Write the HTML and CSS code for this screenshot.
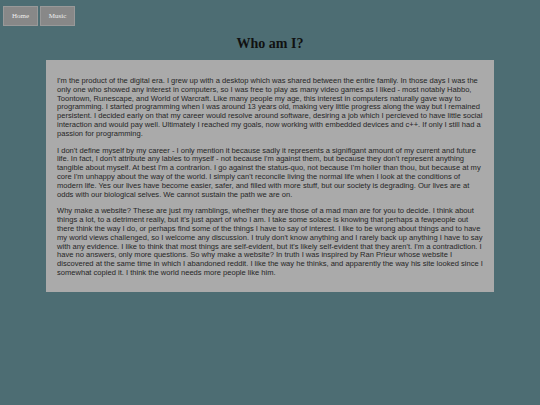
FILE: index.html
```html
<!DOCTYPE html>
<html>
<head>
<meta charset="utf-8">
<title>Who am I?</title>
<link rel="stylesheet" href="styles.css">
</head>
<body>
<nav class="nav">
  <a class="nav-btn" href="#">Home</a>
  <a class="nav-btn" href="#">Music</a>
</nav>
<h1 class="title">Who am I?</h1>
<main class="card">
  <p>I'm the product of the digital era. I grew up with a desktop which was shared between the entire family. In those days I was the only one who showed any interest in computers, so I was free to play as many video games as I liked - most notably Habbo, Toontown, Runescape, and World of Warcraft. Like many people my age, this interest in computers naturally gave way to programming. I started programming when I was around 13 years old, making very little progress along the way but I remained persistent. I decided early on that my career would resolve around software, desiring a job which I percieved to have little social interaction and would pay well. Ultimately I reached my goals, now working with embedded devices and c++. If only I still had a passion for programming.</p>
  <p>I don't define myself by my career - I only mention it because sadly it represents a signifigant amount of my current and future life. In fact, I don't attribute any lables to myself - not because I'm against them, but because they don't represent anything tangible about myself. At best I'm a contrarion. I go against the status-quo, not because I'm holier than thou, but because at my core I'm unhappy about the way of the world. I simply can't reconcile living the normal life when I look at the conditions of modern life. Yes our lives have become easier, safer, and filled with more stuff, but our society is degrading. Our lives are at odds with our biological selves. We cannot sustain the path we are on.</p>
  <p>Why make a website? These are just my ramblings, whether they are those of a mad man are for you to decide. I think about things a lot, to a detriment really, but it's just apart of who I am. I take some solace is knowing that perhaps a fewpeople out there think the way I do, or perhaps find some of the things I have to say of interest. I like to be wrong about things and to have my world views challenged, so I welcome any discussion. I truly don't know anything and I rarely back up anything I have to say with any evidence. I like to think that most things are self-evident, but it's likely self-evident that they aren't. I'm a contradiction. I have no answers, only more questions. So why make a website? In truth I was inspired by Ran Prieur whose website I discovered at the same time in which I abandoned reddit. I like the way he thinks, and apparently the way his site looked since I somewhat copied it. I think the world needs more people like him.</p>
</main>
</body>
</html>
```

FILE: styles.css
```css
html, body {
  margin: 0;
  padding: 0;
  background: #4d6d73;
  height: 100%;
}
body {
  font-family: "Liberation Serif", serif;
}
.nav {
  display: flex;
  gap: 2px;
  padding: 6px 3px 0;
}
.nav-btn {
  display: flex;
  align-items: center;
  justify-content: center;
  width: 33px;
  height: 18px;
  background: #888888;
  border: 1px solid #999999;
  color: #eeeeee;
  font-family: "Liberation Serif", serif;
  font-size: 7px;
  text-decoration: none;
}
.title {
  margin: 10px 0 0;
  text-align: center;
  font-family: "Liberation Serif", serif;
  font-weight: bold;
  font-size: 14px;
  line-height: 16px;
  color: #111111;
}
.card {
  width: 426px;
  margin: 8px auto 0;
  padding: 17px 11px 14px;
  background: #aaaaaa;
  color: #262626;
  font-family: "Liberation Sans", Arial, sans-serif;
  font-size: 7.57px;
  line-height: 8.8px;
  display: flex;
  flex-direction: column;
  gap: 8px;
}
.card p {
  margin: 0;
}
```
